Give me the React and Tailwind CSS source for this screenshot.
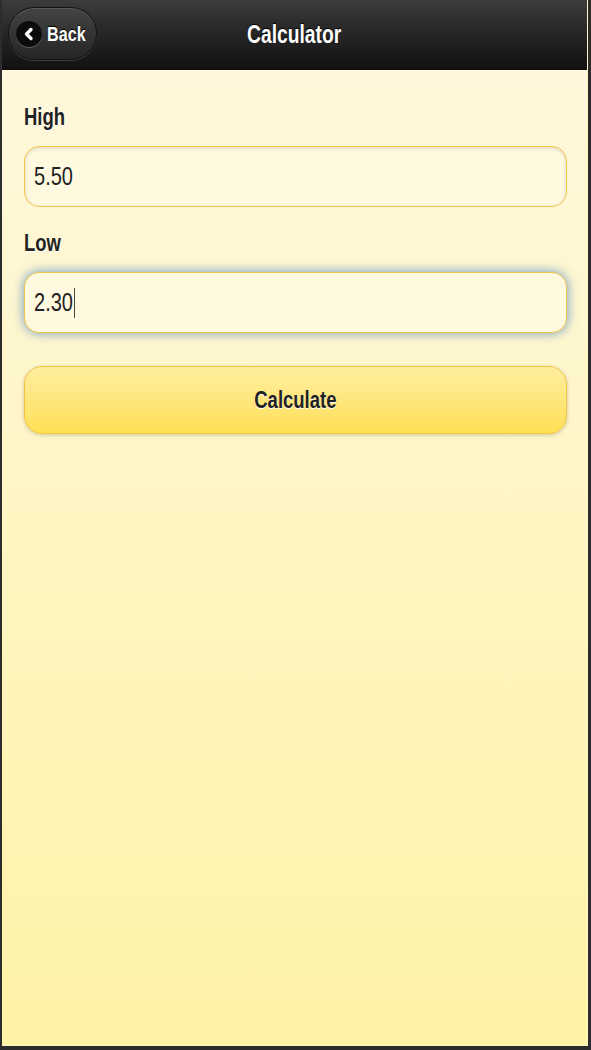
import { useState } from 'react'

const font = { fontFamily: '"Liberation Sans", Arial, sans-serif' }

// the screenshot has a horizontally squeezed face, so text is narrowed with a scale
function Squeeze({ children, center }) {
  return (
    <span className={`inline-block scale-x-[0.77] ${center ? 'origin-center' : 'origin-left'}`}>{children}</span>
  )
}

function BackButton() {
  return (
    <button
      type="button"
      className="flex items-center h-[53px] w-[89px] pl-[7px] rounded-full border border-[#111] bg-gradient-to-b from-[#444] to-[#262626] shadow-[0_1px_0_rgba(255,255,255,0.18),inset_0_1px_0_rgba(255,255,255,0.12)]"
    >
      <span className="flex shrink-0 items-center justify-center w-[26px] h-[26px] rounded-full bg-[#0c0c0c] shadow-[0_1px_0_rgba(255,255,255,0.25)]">
        <svg width="14" height="14" viewBox="0 0 14 14">
          <polyline points="9,2.5 4.5,7 9,11.5" fill="none" stroke="#fff" strokeWidth="3.4" strokeLinecap="round" strokeLinejoin="round" />
        </svg>
      </span>
      <span className="ml-[5px] text-[21px] font-bold text-white [text-shadow:0_-1px_1px_#000]">
        <Squeeze>Back</Squeeze>
      </span>
    </button>
  )
}

function Field({ label, value, focused }) {
  return (
    <div>
      <div className="h-[30px] leading-[30px] text-[24px] font-bold text-[#222] [text-shadow:0_1px_0_#fff]">
        <Squeeze>{label}</Squeeze>
      </div>
      <div
        className={`mt-[14px] flex items-center h-[61px] px-[9px] rounded-[15px] border border-[#f2c64a] bg-[#fff9e0] text-[26px] text-[#222] ${
          focused
            ? 'shadow-[0_0_12px_#6c98c4]'
            : 'shadow-[inset_0_1px_4px_rgba(0,0,0,0.15)]'
        }`}
      >
        <Squeeze>
          <span className="flex items-center">
            {value}
            {focused && <span className="ml-[1px] w-[1.5px] h-[30px] bg-[#111]" />}
          </span>
        </Squeeze>
      </div>
    </div>
  )
}

export default function App() {
  const [high] = useState('5.50')
  const [low] = useState('2.30')

  return (
    <div className="h-[1050px] w-full bg-[#2c2c2c] pl-[2px] pr-[3px] pb-[4px]" style={font}>
      <div className="flex flex-col h-full border-r border-b border-[#fff6c4]">
        {/* header */}
        <div className="relative flex items-center justify-center h-[70px] shrink-0 border-b border-[#111] bg-gradient-to-b from-[#3c3c3c] to-[#111]">
          <div className="absolute left-[6px] top-[7px]">
            <BackButton />
          </div>
          <h1 className="text-[25px] font-bold text-white [text-shadow:0_-1px_1px_#000]">
            <Squeeze center>Calculator</Squeeze>
          </h1>
        </div>

        {/* content */}
        <div className="flex-1 pl-[22px] pr-[20px] pt-[32px] bg-gradient-to-b from-[#fff8dc] to-[#fff3a6]">
          <Field label="High" value={high} />
          <div className="mt-[21px]">
            <Field label="Low" value={low} focused />
          </div>
          <button
            type="button"
            className="mt-[33px] w-full h-[68px] rounded-[18px] border border-[#f0c342] bg-gradient-to-b from-[#ffee9f] to-[#ffdf52] text-[24px] font-bold text-[#222] [text-shadow:0_1px_0_#fff] shadow-[0_1px_4px_rgba(0,0,0,0.2)]"
          >
            <Squeeze center>Calculate</Squeeze>
          </button>
        </div>
      </div>
    </div>
  )
}
